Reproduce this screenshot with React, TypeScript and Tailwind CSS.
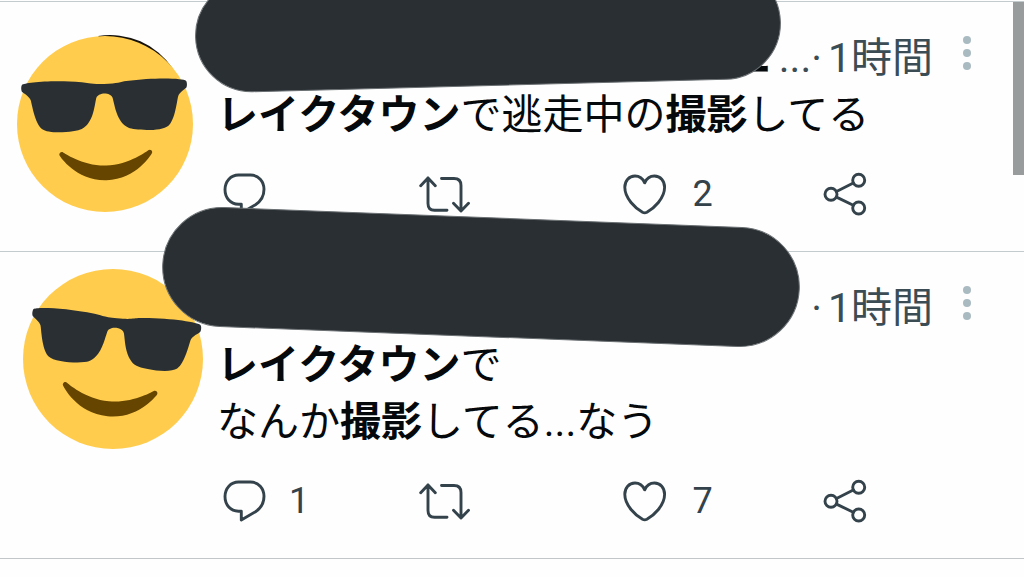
import type { ReactNode } from "react";

function CoolFace({ className, tilt, ring }: { className: string; tilt: number; ring?: boolean }) {
  return (
    <svg className={className} viewBox="0 0 36 36" overflow="visible" role="img" aria-label="avatar">
      {ring && <path d="M16.6 0A15.4 15.4 0 0 1 31.9 6.7L26 12Z" fill="#15120d" />}
      <circle cx="18" cy="18" r="18" fill="#ffcc4d" />
      <g transform={`rotate(${tilt} 18 18)`}>
        <path
          fill="#292f33"
          d="M1.24 11.018c.24.239 1.438.957 1.677 1.675.24.717.72 4.784 2.158 5.981 1.483 1.232 7.077.774 8.148.24 2.397-1.195 2.691-4.531 3.115-6.221.239-.957 1.677-.957 1.677-.957s1.438 0 1.678.956c.424 1.691.72 5.027 3.115 6.221 1.072.535 6.666.994 8.151-.238 1.436-1.197 1.915-5.263 2.155-5.981.238-.717 1.438-1.435 1.677-1.674.241-.239.241-1.196 0-1.436-.479-.478-6.134-.904-12.223-.239-1.215.133-1.677.478-4.554.478-2.875 0-3.339-.346-4.553-.478-6.085-.666-11.741-.24-12.221.239-.239.239-.239 1.197 0 1.434z"
        />
        <path
          fill="#664500"
          d="M27.335 23.629c-.178-.161-.444-.171-.635-.029-.039.029-3.922 2.9-8.7 2.9-4.766 0-8.662-2.871-8.7-2.9-.191-.142-.457-.13-.635.029-.177.16-.217.424-.094.628C8.7 24.472 11.788 29.5 18 29.5s9.301-5.028 9.429-5.243c.123-.205.084-.468-.094-.628z"
        />
      </g>
    </svg>
  );
}

function Action({ label, count, children }: { label: string; count?: number; children: ReactNode }) {
  return (
    <button type="button" aria-label={label} className="flex h-12 items-center gap-5 text-4xl text-[#34434b]">
      <svg
        className="h-12 w-[52px] shrink-0"
        viewBox="0 0 52 48"
        fill="none"
        stroke="currentColor"
        strokeWidth="2.9"
        strokeLinecap="round"
        strokeLinejoin="round"
      >
        {children}
      </svg>
      {count !== undefined && <span>{count}</span>}
    </button>
  );
}

type PostProps = {
  avatar: ReactNode;
  name?: ReactNode;
  replies?: number;
  likes: number;
  children: ReactNode;
};

function Post({ avatar, name, replies, likes, children }: PostProps) {
  return (
    <article className="flex border-t border-[#c3cbce] pt-[27px] pb-[33px]">
      <div className="w-[217px] shrink-0">{avatar}</div>
      <div className="min-w-0 flex-1">
        <header className="flex h-[58px] items-center justify-end pr-[45px] text-[41px] leading-[57px] text-[#3b4c55]">
          {name}
          <span className="mr-1.5">·</span>
          <time className="mr-[22px]">1時間</time>
          <button type="button" aria-label="メニュー" className="h-[58px] w-6">
            <svg className="h-[58px] w-6" viewBox="0 0 24 58" fill="#a9bac1">
              <circle cx="12" cy="11" r="4" />
              <circle cx="12" cy="24" r="4" />
              <circle cx="12" cy="37" r="4" />
            </svg>
          </button>
        </header>
        <p className="text-[41px] leading-[57px] text-[#05090c]">{children}</p>
        <div className="mt-[26px] grid grid-cols-4">
          <Action label="返信" count={replies}>
            <path d="M21.5 5H33.5C41.5 5 47 11.3 47 19.3C47 26 43.5 31.5 38.5 34.7L24.3 43V34.3H21.5C13.5 34 8 28 8 19.5C8 11.3 13.8 5 21.5 5Z" />
          </Action>
          <Action label="リツイート">
            <path d="M1.7 15.8L9 8L16.3 15.8M9 8V33.5Q9 40.3 15.5 40.3H28M22.5 8.5H35Q42 8.5 42 15.5V41M34.5 33.3L42 41L49.5 33.3" />
          </Action>
          <Action label="いいね" count={likes}>
            <path d="M23.7 12.8C22 9 18.7 6 14 6C8 6 3.8 10.8 3.8 17.3C3.8 28.5 14.5 38.2 21.5 42.3Q23.7 43.4 25.9 42.3C32.9 38.2 43.6 28.5 43.6 17.3C43.6 10.8 39.4 6 33.4 6C28.7 6 25.4 9 23.7 12.8Z" />
          </Action>
          <Action label="共有">
            <circle cx="9" cy="24.3" r="6" />
            <circle cx="36.7" cy="10.3" r="6" />
            <circle cx="36.7" cy="38" r="6" />
            <path d="M14.5 21.5L31.3 13M14.5 27.1L31.3 35.3" />
          </Action>
        </div>
      </div>
    </article>
  );
}

export default function App() {
  return (
    <main className="relative min-h-screen overflow-hidden bg-[#fefefe] pt-px font-['Roboto','Noto_Sans_CJK_JP',sans-serif]">
      <Post
        avatar={<CoolFace className="mt-[7px] ml-[17px] size-44" tilt={-1.5} ring />}
        name={
          <>
            <span className="mr-2 font-bold text-[#05090c]">エ</span>
            <span>...</span>
          </>
        }
        likes={2}
      >
        <b className="font-bold">レイクタウン</b>で逃走中の<b className="font-bold">撮影</b>してる
      </Post>
      <div className="border-b border-[#c3c6c8]">
        <Post avatar={<CoolFace className="-mt-[10px] ml-[23px] size-[180px]" tilt={5.5} />} replies={1} likes={7}>
          <b className="font-bold">レイクタウン</b>で
          <br />
          なんか<b className="font-bold">撮影</b>してる...なう
        </Post>
      </div>

      <div className="absolute top-[-27px] left-[195px] h-[113px] w-[586px] -rotate-[1.5deg] rounded-full border border-[#6b7073] bg-[#292f33]" />
      <div className="absolute top-[217px] left-[162px] h-[120px] w-[638px] rotate-[2.2deg] rounded-full border border-[#6b7073] bg-[#292f33]" />
      <div className="absolute top-0.5 right-0 h-[173px] w-[11px] bg-[#999c9c]" />
    </main>
  );
}
